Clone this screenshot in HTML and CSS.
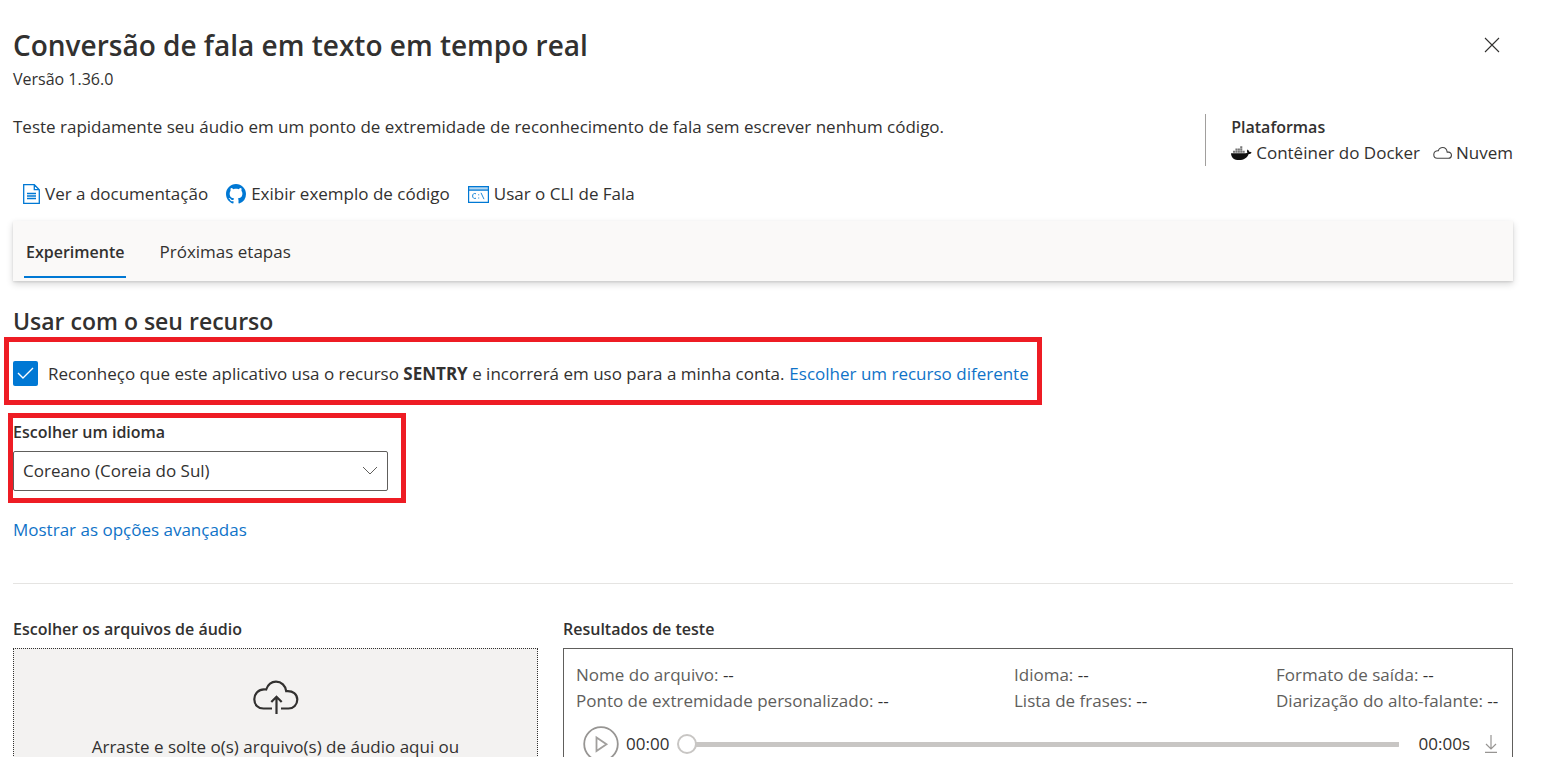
FILE: index.html
```html
<!DOCTYPE html>
<html lang="pt-BR">
<head>
<meta charset="utf-8">
<title>Conversão de fala em texto em tempo real</title>
<link rel="stylesheet" href="styles.css">
</head>
<body>
<main class="page">
  <header class="header">
    <div>
      <h1 class="title">Conversão de fala em texto em tempo real</h1>
      <p class="version">Versão 1.36.0</p>
    </div>
    <button class="close" type="button" aria-label="Fechar">
      <svg width="16" height="16" viewBox="0 0 16 16"><path d="M1 1l14 14M15 1L1 15" fill="none" stroke="#323130" stroke-width="1.1"/></svg>
    </button>
  </header>

  <section class="intro">
    <p class="description">Teste rapidamente seu áudio em um ponto de extremidade de reconhecimento de fala sem escrever nenhum código.</p>
    <div class="platforms">
      <h2 class="label">Plataformas</h2>
      <ul class="platform-list">
        <li class="platform">
          <svg width="21" height="16" viewBox="0 0 21 16"><path fill="#111" d="M0 8.200h14.800c.7 0 1.200-.2 1.600-.5-.6-1-.5-2.200.2-3.100.9.6 1.400 1.300 1.500 2.200.9-.1 1.800 0 2.500.6-.6 1.100-1.600 1.500-2.900 1.500-1.700 4-5 6.100-9.500 6.100C3.200 15 .2 13 0 8.200z"/><path fill="#777" d="M2 5.800h2.100v2H2zM4.400 5.800h2.100v2H4.400zM6.800 5.800h2.100v2H6.800zM9.200 5.800h2.100v2H9.200zM11.600 5.800h2.100v2h-2.100zM4.400 3.500h2.100v2H4.400zM6.800 3.500h2.100v2H6.800zM9.200 3.500h2.100v2H9.200zM9.200 1.300h2.100v2H9.200z"/></svg>
          Contêiner do Docker
        </li>
        <li class="platform">
          <svg width="19" height="14" viewBox="0 0 19 14"><path fill="none" stroke="#444" stroke-width="1.100" d="M4.200 12.300h11a3.100 3.100 0 0 0 .3-6.200h-1.300C13.700 3.200 12 1.500 9.700 1.500 7.600 1.500 6 2.700 5.300 4.700 2.600 4.500.8 6.200.8 8.500c0 2.200 1.500 3.800 3.400 3.800z"/></svg>
          Nuvem
        </li>
      </ul>
    </div>
  </section>

  <nav class="links" aria-label="Recursos">
    <a class="resource" href="#docs">
      <svg width="17" height="20" viewBox="0 0 17 20"><path fill="none" stroke="#0078d4" stroke-width="1.300" d="M.7.7h10.600l5 5v13.600H.7zM11.300.7v5h5M4 9.500h9M4 12h9M4 14.500h9"/></svg>
      Ver a documentação
    </a>
    <a class="resource" href="#exemplo">
      <svg width="20" height="20" viewBox="0 0 16 16"><path fill="#0078d4" d="M8 0C3.580 0 0 3.580 0 8c0 3.540 2.290 6.530 5.470 7.590.4.070.55-.17.55-.38 0-.19-.010-.82-.010-1.490-2.010.37-2.530-.49-2.690-.94-.09-.23-.48-.94-.82-1.130-.28-.15-.68-.52-.010-.53.63-.010 1.080.58 1.230.82.72 1.210 1.870.87 2.330.66.070-.52.280-.87.510-1.070-1.780-.2-3.640-.89-3.640-3.950 0-.87.310-1.590.82-2.150-.08-.2-.36-1.020.080-2.120 0 0 .67-.21 2.200.82.640-.18 1.320-.27 2-.27s1.360.09 2 .27c1.530-1.040 2.200-.82 2.200-.82.440 1.100.160 1.920.080 2.120.51.560.82 1.270.82 2.150 0 3.070-1.870 3.750-3.650 3.950.29.250.54.730.54 1.480 0 1.070-.010 1.930-.010 2.200 0 .21.150.46.55.38A8.010 8.010 0 0 0 16 8c0-4.420-3.580-8-8-8z"/></svg>
      Exibir exemplo de código
    </a>
    <a class="resource" href="#cli">
      <svg width="21" height="17" viewBox="0 0 21 17"><path fill="#b3d7f2" d="M1 1h19v3H1z"/><path fill="none" stroke="#0078d4" stroke-width="1.200" d="M.6.6h19.800v15.800H.6zM.6 4.200h19.800"/><path fill="none" stroke="#0078d4" stroke-width=".9" d="M8 7.800C6 6.900 4.600 8 4.600 10s1.600 3 3.400 2.200M10.700 8.300v1M10.700 11.500v1M13 6.800l3 6.400"/></svg>
      Usar o CLI de Fala
    </a>
  </nav>

  <div class="tabs" role="tablist">
    <button class="tab tab-active" type="button" role="tab" aria-selected="true">Experimente</button>
    <button class="tab" type="button" role="tab" aria-selected="false">Próximas etapas</button>
  </div>

  <h2 class="section-title">Usar com o seu recurso</h2>

  <div class="highlight consent">
    <input class="check" type="checkbox" id="consent" checked>
    <label for="consent">Reconheço que este aplicativo usa o recurso <strong>SENTRY</strong> e incorrerá em uso para a minha conta.</label>
    <a class="link" href="#recurso">Escolher um recurso diferente</a>
  </div>

  <div class="highlight language">
    <label class="label" for="language">Escolher um idioma</label>
    <div class="select-wrap">
      <select class="select" id="language"><option>Coreano (Coreia do Sul)</option></select>
      <svg class="chevron" width="16" height="9" viewBox="0 0 16 9"><path fill="none" stroke="#605e5c" d="M1 1l7 7 7-7"/></svg>
    </div>
  </div>

  <a class="link advanced" href="#opcoes">Mostrar as opções avançadas</a>

  <hr class="divider">

  <div class="columns">
    <section class="column">
      <h3 class="label">Escolher os arquivos de áudio</h3>
      <div class="dropzone">
        <svg width="46" height="35" viewBox="0 0 46 35"><path fill="none" stroke="#323130" stroke-width="2.200" d="M19 28.500H10.500C5 28.500 1.300 24.700 1.300 19.300S5.500 9.300 11 9.300c.8 0 1.500.1 2.200.2C15 4.500 18 1.700 23 1.700c5.500 0 9.500 4 10.200 9.400C40 10.500 44.300 14 44.300 19.500c0 5.200-3.800 9-8.800 9H28M23.500 34V17M18.300 22l5.200-5.200 5.200 5.200"/></svg>
        <p>Arraste e solte o(s) arquivo(s) de áudio aqui ou</p>
      </div>
    </section>
    <section class="column">
      <h3 class="label">Resultados de teste</h3>
      <div class="results">
        <div class="facts">
          <p>Nome do arquivo: <span class="value">--</span></p>
          <p>Idioma: <span class="value">--</span></p>
          <p>Formato de saída: <span class="value">--</span></p>
          <p>Ponto de extremidade personalizado: <span class="value">--</span></p>
          <p>Lista de frases: <span class="value">--</span></p>
          <p>Diarização do alto-falante: <span class="value">--</span></p>
        </div>
        <div class="player">
          <button class="play" type="button" aria-label="Reproduzir">
            <svg width="36" height="36" viewBox="0 0 36 36"><circle cx="18" cy="18" r="16.800" fill="none" stroke="#979593" stroke-width="1.800"/><path fill="none" stroke="#a19f9d" stroke-width="1.800" d="M13.500 11.500v13.500l10-6.700z"/></svg>
          </button>
          <span>00:00</span>
          <input class="seek" type="range" min="0" max="100" value="0" aria-label="Posição">
          <span>00:00s</span>
          <button class="download" type="button" aria-label="Baixar">
            <svg width="12" height="18" viewBox="0 0 12 18"><path fill="none" stroke="#979593" stroke-width="1.200" d="M6 0v14M1 9l5 5 5-5M0 17.300h12"/></svg>
          </button>
        </div>
      </div>
    </section>
  </div>
</main>
</body>
</html>
```
FILE: styles.css
```css
* { box-sizing: border-box; }

body {
  margin: 0;
  background: #fff;
  color: #323130;
  font: 17px/26px "Segoe UI", "Open Sans", "Noto Sans", sans-serif;
}

h1, h2, h3, p, ul { margin: 0; padding: 0; }
a { color: inherit; text-decoration: none; }
svg { flex: none; display: block; }
button {
  padding: 0;
  border: 0;
  background: none;
  color: inherit;
  font: inherit;
}

.page {
  height: 100vh;
  overflow: hidden;
  padding: 24px 45px 0 13px;
}

.header, .intro {
  display: flex;
  justify-content: space-between;
  align-items: flex-start;
}
.title { font-size: 28px; line-height: 42px; font-weight: 600; }
.version { font-size: 16px; }
.close { padding: 13px; }

.intro { margin-top: 22px; }
.platforms { padding-left: 25px; border-left: 1px solid #a19f9d; }
.label {
  display: block;
  font-size: 16px;
  line-height: 26px;
  font-weight: 600;
}
.platform-list { display: flex; gap: 13px; list-style: none; }
.platform { display: flex; align-items: center; gap: 4px; }

.links { display: flex; gap: 18px; padding-left: 10px; margin-top: 15px; }
.resource { display: flex; align-items: center; gap: 5px; }

.tabs {
  display: flex;
  gap: 31px;
  height: 60px;
  margin-top: 14px;
  padding: 6px 11px 3px;
  background: #faf9f8;
  box-shadow: 0 3px 7px rgba(0, 0, 0, .16), 0 1px 2px rgba(0, 0, 0, .1);
}
.tab { padding: 0 2px; border-bottom: 2px solid transparent; }
.tab-active { font-size: 16px; font-weight: 600; border-color: #0078d4; }

.section-title {
  margin-top: 24px;
  font-size: 23px;
  line-height: 32px;
  font-weight: 600;
}

.highlight { width: fit-content; border: 5px solid #ee1c24; }
.consent {
  display: flex;
  align-items: center;
  height: 68px;
  margin-left: -9px;
  padding: 5px 8px 0 4px;
}
.check {
  appearance: none;
  width: 25px;
  height: 25px;
  margin: 0 10px 0 0;
  border-radius: 2px;
  background: #0078d4 url("data:image/svg+xml,%3Csvg xmlns='http://www.w3.org/2000/svg' viewBox='0 0 25 25'%3E%3Cpath d='M5 12l5 5 10-10' fill='none' stroke='white' stroke-width='1.4'/%3E%3C/svg%3E");
}
.link { color: #0f73c8; }
.consent .link { margin-left: 5px; }

.language {
  margin: 8px 0 0 -5px;
  padding: 1px 13px 7px 0;
}
.select-wrap { position: relative; margin-top: 6px; }
.select {
  appearance: none;
  width: 375px;
  height: 40px;
  padding: 0 40px 0 9px;
  border: 1px solid #605e5c;
  border-radius: 2px;
  background: #fff;
  color: inherit;
  font: inherit;
}
.chevron { position: absolute; right: 10px; top: 15px; pointer-events: none; }

.advanced { display: block; width: fit-content; margin-top: 14px; }
.divider { margin: 40px 0 0; border: 0; border-top: 1px solid #e5e4e2; }

.columns {
  display: grid;
  grid-template-columns: 525fr 950fr;
  gap: 25px;
  margin-top: 32px;
}
.column { display: flex; flex-direction: column; gap: 6px; }
.dropzone {
  display: flex;
  flex: 1;
  flex-direction: column;
  align-items: center;
  gap: 19px;
  padding: 31px 20px;
  border: 1px dotted #323130;
  background: #f3f2f1;
}
.results { padding: 13px 12px 24px; border: 1px solid #605e5c; }
.facts {
  display: grid;
  grid-template-columns: 438fr 262fr 224fr;
  color: #605e5c;
  white-space: nowrap;
}
.value { color: #323130; }

.player { display: flex; align-items: center; margin-top: 12px; padding: 0 3px 0 7px; }
.play { margin-right: 7px; }
.seek {
  appearance: none;
  flex: 1;
  min-width: 0;
  height: 20px;
  margin: 0 20px 0 8px;
  border-radius: 8px;
  background: linear-gradient(#c8c6c4, #c8c6c4) right / calc(100% - 8px) 5px no-repeat;
}
.seek::-webkit-slider-thumb {
  appearance: none;
  width: 20px;
  height: 20px;
  border: 2px solid #c8c6c4;
  border-radius: 50%;
  background: #fff;
}
.download { margin-left: 15px; }
```
